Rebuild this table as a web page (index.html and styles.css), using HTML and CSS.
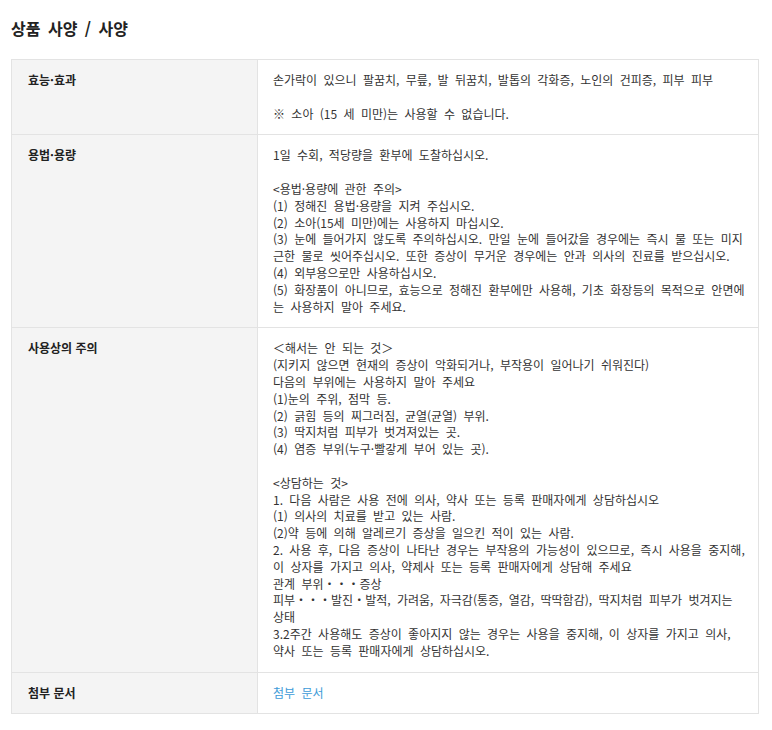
FILE: index.html
```html
<!DOCTYPE html>
<html lang="ko">
<head>
  <meta charset="utf-8">
  <title>상품 사양 / 사양</title>
  <link rel="stylesheet" href="styles.css">
</head>
<body>
  <div class="container">
    <h2>상품 사양 / 사양</h2>

    <table class="spec-table">
      <tbody>
        <tr>
          <th>효능·효과</th>
          <td>
            <p>손가락이 있으니 팔꿈치, 무릎, 발 뒤꿈치, 발톱의 각화증, 노인의 건피증, 피부 피부</p>
            <p class="gap">※ 소아 (15 세 미만)는 사용할 수 없습니다.</p>
          </td>
        </tr>
        <tr>
          <th>용법·용량</th>
          <td>
            <p>1일 수회, 적당량을 환부에 도찰하십시오.</p>
            <p class="gap">&lt;용법·용량에 관한 주의&gt;</p>
            <p>(1) 정해진 용법·용량을 지켜 주십시오.</p>
            <p>(2) 소아(15세 미만)에는 사용하지 마십시오.</p>
            <p>(3) 눈에 들어가지 않도록 주의하십시오. 만일 눈에 들어갔을 경우에는 즉시 물 또는 미지근한 물로 씻어주십시오. 또한 증상이 무거운 경우에는 안과 의사의 진료를 받으십시오.</p>
            <p>(4) 외부용으로만 사용하십시오.</p>
            <p>(5) 화장품이 아니므로, 효능으로 정해진 환부에만 사용해, 기초 화장등의 목적으로 안면에는 사용하지 말아 주세요.</p>
          </td>
        </tr>
        <tr>
          <th>사용상의 주의</th>
          <td>
            <p>＜해서는 안 되는 것＞</p>
            <p>(지키지 않으면 현재의 증상이 악화되거나, 부작용이 일어나기 쉬워진다)</p>
            <p>다음의 부위에는 사용하지 말아 주세요</p>
            <p>(1)눈의 주위, 점막 등.</p>
            <p>(2) 긁힘 등의 찌그러짐, 균열(균열) 부위.</p>
            <p>(3) 딱지처럼 피부가 벗겨져있는 곳.</p>
            <p>(4) 염증 부위(누구·빨갛게 부어 있는 곳).</p>
            <p class="gap">&lt;상담하는 것&gt;</p>
            <p>1. 다음 사람은 사용 전에 의사, 약사 또는 등록 판매자에게 상담하십시오</p>
            <p>(1) 의사의 치료를 받고 있는 사람.</p>
            <p>(2)약 등에 의해 알레르기 증상을 일으킨 적이 있는 사람.</p>
            <p>2. 사용 후, 다음 증상이 나타난 경우는 부작용의 가능성이 있으므로, 즉시 사용을 중지해, 이 상자를 가지고 의사, 약제사 또는 등록 판매자에게 상담해 주세요</p>
            <p>관계 부위・・・증상</p>
            <p>피부・・・발진・발적, 가려움, 자극감(통증, 열감, 딱딱함감), 딱지처럼 피부가 벗겨지는 상태</p>
            <p>3.2주간 사용해도 증상이 좋아지지 않는 경우는 사용을 중지해, 이 상자를 가지고 의사, 약사 또는 등록 판매자에게 상담하십시오.</p>
          </td>
        </tr>
        <tr>
          <th>첨부 문서</th>
          <td><a href="#" class="doc-link">첨부 문서</a></td>
        </tr>
      </tbody>
    </table>
  </div>
</body>
</html>
```

FILE: styles.css
```css
:root {
  --text-color: #333333;
  --title-color: #222222;
  --label-background: #f4f4f4;
  --border-color: #e3e3e3;
  --link-color: #3d9bd8;
}

body {
  font-family: "Noto Sans CJK KR", "Noto Sans", sans-serif;
  color: var(--text-color);
  background-color: #ffffff;
  margin: 0;
}

.container {
  padding: 17px 13px 0 11px;
}

h2 {
  margin: 0 0 20px;
  font-size: 16px;
  line-height: 22px;
  font-weight: 700;
  color: var(--title-color);
  word-spacing: 3px;
}

.spec-table {
  width: 100%;
  border-collapse: collapse;
  font-size: 12px;
  line-height: 16.8px;
}

.spec-table th,
.spec-table td {
  border: 1px solid var(--border-color);
  padding: 12px 13px 12px 15px;
  text-align: left;
  vertical-align: top;
}

.spec-table th {
  width: 216px;
  padding-left: 16px;
  background-color: var(--label-background);
  color: var(--title-color);
  font-weight: 700;
}

.spec-table td {
  word-spacing: 3px;
}

.spec-table p {
  margin: 0;
}

.spec-table p.gap {
  margin-top: 16.8px;
}

.doc-link {
  color: var(--link-color);
  text-decoration: none;
}
```
